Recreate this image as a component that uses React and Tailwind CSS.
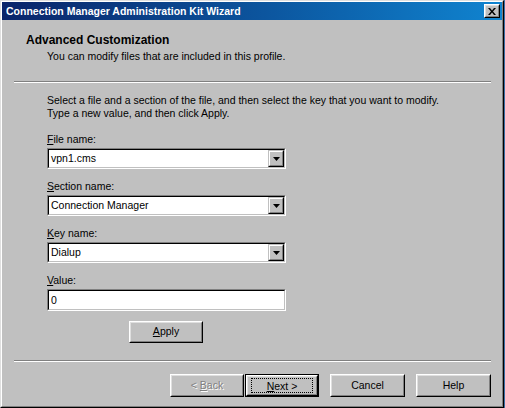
import React from 'react';

// sunken 3D field (combo / edit)
const Field = ({ children, height = 'h-[21px]' }) => (
  <div className={`w-[239px] ${height} border border-t-[#808080] border-l-[#808080] border-b-white border-r-white`}>
    <div className="h-full border border-t-black border-l-black border-b-[#c0c0c0] border-r-[#c0c0c0] bg-white flex items-center">
      {children}
    </div>
  </div>
);

const Arrow = () => (
  <div className="w-[16px] h-full border border-t-[#c0c0c0] border-l-[#c0c0c0] border-b-black border-r-black">
    <div className="w-full h-full border border-t-white border-l-white border-b-[#808080] border-r-[#808080] bg-[#c0c0c0] flex items-center justify-center">
      <svg width="7" height="4" viewBox="0 0 7 4">
        <path d="M0 0h7L3.5 4z" fill="#000" />
      </svg>
    </div>
  </div>
);

const Combo = ({ value }) => (
  <Field>
    <span className="flex-1 pl-[2px] leading-[13px]">{value}</span>
    <Arrow />
  </Field>
);

const Raised = ({ children, className = '' }) => (
  <div className={`border border-t-white border-l-white border-b-black border-r-black ${className}`}>
    <div className="h-full border border-t-[#dfdfdf] border-l-[#dfdfdf] border-b-[#808080] border-r-[#808080] bg-[#c0c0c0] flex items-center justify-center">
      {children}
    </div>
  </div>
);

const U = ({ children }) => <span className="underline underline-offset-[1px]">{children}</span>;

const Label = ({ mnemonic, rest }) => (
  <div className="leading-[13px] mb-[2px]">
    <U>{mnemonic}</U>{rest}
  </div>
);

export default function App() {
  return (
    <div className="w-[505px] h-[408px] bg-[#3a6ea5] font-['Liberation_Sans',Arial,sans-serif] text-[10.5px] text-black">
      <div className="w-[504px] h-[408px] border border-t-[#dfdfdf] border-l-[#dfdfdf] border-r-black border-b-black">
        <div className="h-full border border-t-white border-l-white border-r-[#808080] border-b-[#808080] bg-[#c0c0c0] flex flex-col">
          {/* Title bar */}
          <div className="h-[18px] flex items-center justify-between pl-[4px] pr-[2px] bg-linear-to-r from-[#0a246a] to-[#1084d0]">
            <span className="text-white font-bold text-[10.5px] leading-[13px]">Connection Manager Administration Kit Wizard</span>
            <Raised className="w-[16px] h-[14px]">
              <svg width="8" height="7" viewBox="0 0 8 7">
                <path d="M0 0h2l2 2.5L6 0h2L5 3.5 8 7H6L4 4.5 2 7H0l3-3.5z" fill="#000" />
              </svg>
            </Raised>
          </div>

          {/* Header */}
          <div className="mt-[12px] pl-[24px] text-[12px] font-bold leading-[16px]">Advanced Customization</div>
          <div className="mt-[2px] pl-[45px] leading-[13px]">You can modify files that are included in this profile.</div>

          <div className="mt-[18px] ml-[12px] w-[477px] border-t border-t-[#808080] border-b border-b-white" />

          {/* Form */}
          <div className="pl-[45px] flex flex-col">
            <div className="mt-[11px] leading-[13px]">
              <div>Select a file and a section of the file, and then select the key that you want to modify.</div>
              <div>Type a new value, and then click Apply.</div>
            </div>

            <div className="mt-[13px]">
              <Label mnemonic="F" rest="ile name:" />
              <Combo value="vpn1.cms" />
            </div>
            <div className="mt-[11px]">
              <Label mnemonic="S" rest="ection name:" />
              <Combo value="Connection Manager" />
            </div>
            <div className="mt-[11px]">
              <Label mnemonic="K" rest="ey name:" />
              <Combo value="Dialup" />
            </div>
            <div className="mt-[11px]">
              <Label mnemonic="V" rest="alue:" />
              <Field height="h-[22px]">
                <span className="pl-[2px] leading-[13px]">0</span>
              </Field>
            </div>

            <div className="mt-[10px] ml-[82px]">
              <Raised className="w-[74px] h-[22px]">
                <span><U>A</U>pply</span>
              </Raised>
            </div>
          </div>

          <div className="mt-[17px] ml-[12px] w-[477px] border-t border-t-[#808080] border-b border-b-white" />

          {/* Wizard buttons */}
          <div className="mt-[12px] pl-[168px] flex">
            <Raised className="w-[74px] h-[23px]">
              <span className="text-[#808080] [text-shadow:1px_1px_0_#fff]">&lt; <U>B</U>ack</span>
            </Raised>
            <div className="ml-[1px] w-[74px] h-[23px] border border-black">
              <Raised className="w-full h-full">
                <div className="w-[62px] h-[15px] border border-dotted border-black flex items-center justify-center leading-[12px]">
                  <span><U>N</U>ext &gt;</span>
                </div>
              </Raised>
            </div>
            <Raised className="ml-[11px] w-[75px] h-[23px]">
              <span>Cancel</span>
            </Raised>
            <Raised className="ml-[11px] w-[75px] h-[23px]">
              <span>Help</span>
            </Raised>
          </div>
        </div>
      </div>
    </div>
  );
}
